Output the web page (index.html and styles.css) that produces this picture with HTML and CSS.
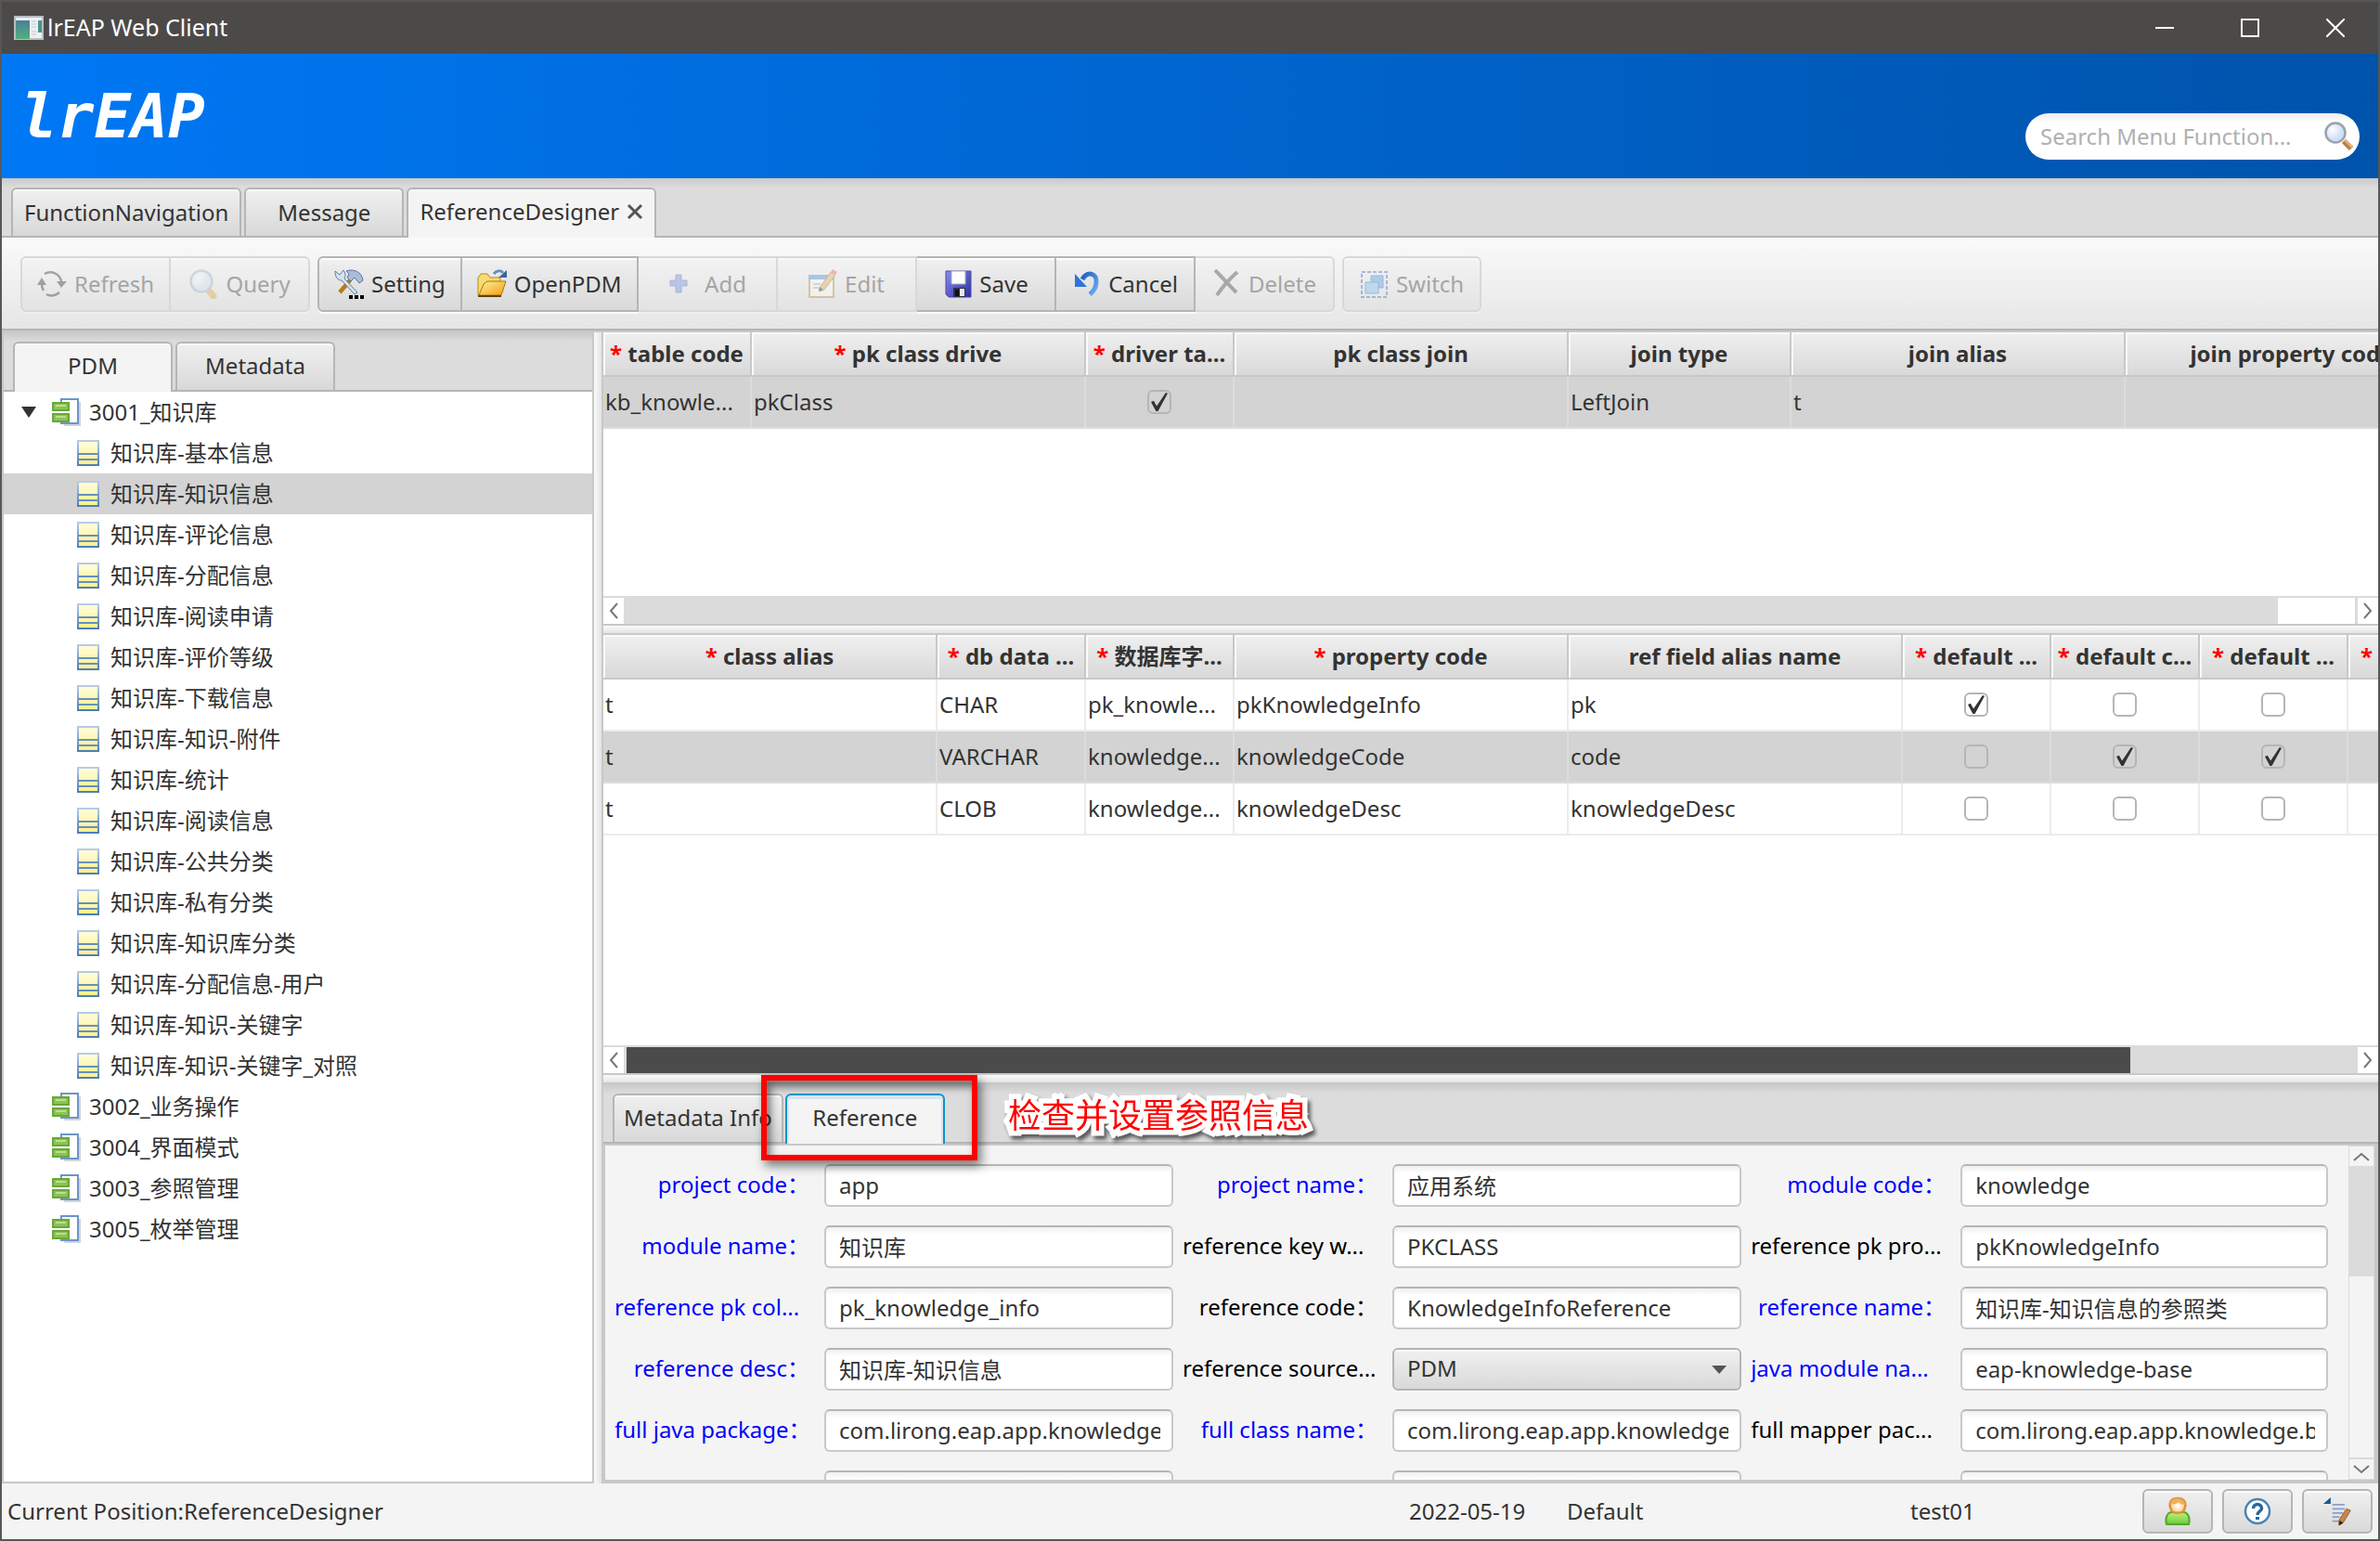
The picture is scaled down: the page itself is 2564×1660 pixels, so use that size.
FILE: index.html
```html
<!DOCTYPE html>
<html lang="zh-CN">
<head>
<meta charset="utf-8">
<title>lrEAP Web Client</title>
<link rel="stylesheet" href="styles.css">
</head>
<body>
<svg class="defs" aria-hidden="true">
  <defs>
    <linearGradient id="g-table" x1="0" y1="0" x2="0" y2="1"><stop offset="0" stop-color="#b9cbe4"/><stop offset="1" stop-color="#4d7db8"/></linearGradient>
    <linearGradient id="g-page" x1="0" y1="0" x2="0" y2="1"><stop offset="0" stop-color="#fffde0"/><stop offset="1" stop-color="#fff08a"/></linearGradient>
    <linearGradient id="g-green" x1="0" y1="0" x2="0" y2="1"><stop offset="0" stop-color="#c0ef7c"/><stop offset="1" stop-color="#6fcb3c"/></linearGradient>
    <linearGradient id="g-folder" x1="0" y1="0" x2="1" y2="1"><stop offset="0" stop-color="#fff09a"/><stop offset="1" stop-color="#f0a010"/></linearGradient>
    <linearGradient id="g-disk" x1="0" y1="0" x2="1" y2="1"><stop offset="0" stop-color="#8b8cf0"/><stop offset="1" stop-color="#2e2e9c"/></linearGradient>
    <linearGradient id="g-undo" x1="0" y1="0" x2="1" y2="1"><stop offset="0" stop-color="#1f5fc4"/><stop offset="1" stop-color="#6fb0f4"/></linearGradient>
    <radialGradient id="g-lens" cx=".35" cy=".35"><stop offset="0" stop-color="#fff"/><stop offset="1" stop-color="#cfe0f6"/></radialGradient>
    <radialGradient id="g-face"><stop offset="0" stop-color="#fff"/><stop offset="1" stop-color="#ffcf8c"/></radialGradient>
    <linearGradient id="g-app" x1="0" y1="0" x2="0" y2="1"><stop offset="0" stop-color="#4a7f9c"/><stop offset="1" stop-color="#52b07a"/></linearGradient>
  </defs>
  <symbol id="i-app" viewBox="0 0 32 26">
    <path d="M1 1h30v24H1z" fill="#eef0f3" stroke="#b9bcc4" stroke-width="2"/>
    <path d="M2 5h15v20H2z" fill="url(#g-app)"/>
    <path d="M19 6h5M19 9h5M19 12h5M19 17h5M19 20h5" stroke="#c4c8cf"/>
    <path d="M26 5h4v13h-4z" fill="#4b9390"/>
  </symbol>
  <symbol id="i-glass" viewBox="0 0 32 32">
    <path d="M21 21l8 8" stroke="#b9803f" stroke-width="6"/>
    <path d="M22 20l8 8" stroke="#e2b47c" stroke-width="2"/>
    <circle cx="12" cy="12" r="10.500" fill="url(#g-lens)" stroke="#9aa3ad" stroke-width="2.500"/>
  </symbol>
  <symbol id="i-query" viewBox="0 0 32 32">
    <path d="M21 22l6 7" stroke="#e0a83c" stroke-width="7" stroke-linecap="round"/>
    <circle cx="14" cy="13" r="11.500" fill="url(#g-lens)" stroke="#a3b1c2" stroke-width="2.500"/>
  </symbol>
  <symbol id="i-refresh" viewBox="0 0 32 32">
    <g fill="none" stroke="#333" stroke-width="2.500"><path d="M8 5a12 12 0 0 1 18 8"/><path d="M5 16a12 12 0 0 0 2 7"/><path d="M10 27a12 12 0 0 0 14-2"/></g>
    <path d="M21 13h11l-6 7zM0 17h10L5 9z" fill="#333"/>
  </symbol>
  <symbol id="i-tools" viewBox="0 0 32 32">
    <path d="M6 25l11-13" stroke="#b87a18" stroke-width="4.500"/>
    <path d="M13 2c8-3 17 1 18 10l-4 3-5-6-4 4-4-4 2-4z" fill="#a9bdd8" stroke="#58749c"/>
    <path d="M1 2l5 4 4-5c3 4 2 7 1 9l14 15-3 2L8 12C4 12 1 9 1 2z" fill="#d6e2f2" stroke="#62799a"/>
    <path d="M16 28h4v4h-4zM22 28h4v4h-4zM28 28h4v4h-4z" fill="#000"/>
  </symbol>
  <symbol id="i-folder" viewBox="0 0 32 32">
    <path d="M1 9l3-4h7l3 4h11v19H1z" fill="#f7dc72" stroke="#b58a1c"/>
    <path d="M7 16l4-3h20l-5 15H2z" fill="url(#g-folder)" stroke="#a8740c"/>
    <path d="M1 29h25" stroke="#5e4410" stroke-width="2"/>
    <path d="M18 5c3-4 8-4 10-1" fill="none" stroke="#6d8fbd" stroke-width="3"/>
    <path d="M32 1v8h-9z" fill="#3f6399"/>
  </symbol>
  <symbol id="i-add" viewBox="0 0 32 32"><path d="M9 6h6v6h6v6h-6v7H9v-7H3v-6h6z" fill="#6f8ede" stroke="#4d6ac0"/></symbol>
  <symbol id="i-edit" viewBox="0 0 32 32">
    <path d="M2 8h26v22H2z" fill="#fffdf4" stroke="#b7903c" stroke-width="2"/>
    <path d="M1 6h28v5H1z" fill="#3f8fd0"/><path d="M6 16h8M6 20h6" stroke="#9db9d9" stroke-width="2"/>
    <path d="M13 20L25 3l5 3-12 16-5 2z" fill="#e6a95e" stroke="#a0662a"/><path d="M25 3l2-3 5 3-2 3z" fill="#e2665a"/>
    <path d="M12 24l1-5 4 3z" fill="#222"/>
  </symbol>
  <symbol id="i-save" viewBox="0 0 32 32">
    <path d="M4 2h27v28H7l-3-3z" fill="url(#g-disk)" stroke="#4a48b4"/>
    <path d="M10 2h15v14H10z" fill="#fff" stroke="#aab"/><path d="M12 20h13v10H12z" fill="#2b2b55"/><path d="M14 22h4v7h-4z" fill="#111"/><path d="M19 21h5v8h-5z" fill="#e8e8e8"/>
  </symbol>
  <symbol id="i-undo" viewBox="0 0 32 32">
    <path d="M12 11C18 1 28 5 27 14c0 6-3 10-7 13" fill="none" stroke="url(#g-undo)" stroke-width="5"/>
    <path d="M4 5v14h13z" fill="#2f74d6"/>
  </symbol>
  <symbol id="i-delete" viewBox="0 0 32 32"><path d="M4 1c8 8 16 17 23 24M28 3C20 10 12 19 6 28" fill="none" stroke="#444" stroke-width="4"/></symbol>
  <symbol id="i-switch" viewBox="0 0 32 32">
    <path d="M3 3h27v27H3z" fill="none" stroke="#3c6cc4" stroke-width="2" stroke-dasharray="4 2"/>
    <path d="M13 7h13v13H13z" fill="#4f9ce0" stroke="#2e6eb8"/><path d="M7 14h14v12H7z" fill="#7cc0f4" stroke="#2e6eb8"/>
  </symbol>
  <symbol id="i-module" viewBox="0 0 32 32">
    <path d="M13 30h17V5" fill="none" stroke="#d2d4d8" stroke-width="2"/>
    <path d="M10 6V2h18v26H10v-4" fill="#fff" stroke="#6c95c8" stroke-width="2"/>
    <path d="M1 6h17v8H1zM1 18h17v8H1z" fill="#8dc257" stroke="#6ba63a" stroke-width="2"/>
    <path d="M4 9h11M4 21h11" stroke="#b9e08c" stroke-width="2"/>
  </symbol>
  <symbol id="i-table" viewBox="0 0 24 28">
    <path d="M1 1h22v26H1z" fill="url(#g-page)" stroke="url(#g-table)" stroke-width="2"/>
    <path d="M1 15h22M1 21h22" stroke="#668fbe" stroke-width="2"/>
  </symbol>
  <symbol id="i-user" viewBox="0 0 32 32">
    <path d="M4 30c-2-7 1-13 6-13h12c5 0 8 6 6 13z" fill="url(#g-green)" stroke="#55a82c" stroke-width="2"/>
    <circle cx="16" cy="10" r="8" fill="url(#g-face)"/>
    <path d="M9 14c-3-6-1-12 7-12s10 6 7 12c-1 5-13 5-14 0z" fill="none" stroke="#dc9434" stroke-width="2.500"/>
    <path d="M8 8c1-8 15-8 16 1-4 0-6-2-7-3-2 2-5 3-9 2z" fill="#eeb060"/>
  </symbol>
  <symbol id="i-help" viewBox="0 0 32 32">
    <circle cx="16" cy="16" r="13" fill="#fff" stroke="#4a84b4" stroke-width="2.500"/>
    <path d="M11.500 13c0-6 9-6 9 0 0 3-4.500 3-4.500 7" fill="none" stroke="#2b6699" stroke-width="3.500"/><path d="M14 22h4v3h-4z" fill="#2b6699"/>
  </symbol>
  <symbol id="i-log" viewBox="0 0 36 36">
    <path d="M1 9L10 1v8z" fill="#1d5a8a"/>
    <path d="M12 10h15M12 15h15M12 20h13M12 25h9M12 30h7" stroke="#8b9ecb" stroke-width="2"/>
    <path d="M20 29L29 15l5 2-9 15-5 3z" fill="#cf8642" stroke="#8d5524"/><path d="M20 35l1-6 4 3z" fill="#222"/>
  </symbol>
  <symbol id="i-chev" viewBox="0 0 12 20"><path d="M10 2L3 10l7 8" fill="none" stroke="#777" stroke-width="2"/></symbol>
</svg>

<div class="window">
  <header class="titlebar">
    <svg class="app-icon"><use href="#i-app"/></svg>
    <span class="title">lrEAP Web Client</span>
    <div class="win-controls">
      <button type="button" aria-label="Minimize"><svg viewBox="0 0 20 20"><path d="M0 10h20" stroke="#fff" stroke-width="2"/></svg></button>
      <button type="button" aria-label="Maximize"><svg viewBox="0 0 20 20"><path d="M1 1h18v18H1z" fill="none" stroke="#fff" stroke-width="2"/></svg></button>
      <button type="button" aria-label="Close"><svg viewBox="0 0 20 20"><path d="M0 0l20 20M20 0L0 20" stroke="#fff" stroke-width="2"/></svg></button>
    </div>
  </header>

  <div class="banner">
    <h1 class="logo">lrEAP</h1>
    <label class="search">
      <input type="text" placeholder="Search Menu Function..." aria-label="Search Menu Function">
      <svg><use href="#i-glass"/></svg>
    </label>
  </div>

  <nav class="tabs">
    <button type="button" class="tab">FunctionNavigation</button>
    <button type="button" class="tab">Message</button>
    <button type="button" class="tab active">ReferenceDesigner<svg class="close" viewBox="0 0 18 18"><path d="M2 2l14 14M16 2L2 16" stroke="#555" stroke-width="3"/></svg></button>
  </nav>

  <div class="toolbar">
    <div class="group">
      <button type="button" disabled><svg><use href="#i-refresh"/></svg>Refresh</button>
      <button type="button" disabled><svg><use href="#i-query"/></svg>Query</button>
    </div>
    <div class="group">
      <button type="button"><svg><use href="#i-tools"/></svg>Setting</button>
      <button type="button"><svg><use href="#i-folder"/></svg>OpenPDM</button>
      <button type="button" disabled><svg><use href="#i-add"/></svg>Add</button>
      <button type="button" disabled><svg><use href="#i-edit"/></svg>Edit</button>
      <button type="button"><svg><use href="#i-save"/></svg>Save</button>
      <button type="button"><svg><use href="#i-undo"/></svg>Cancel</button>
      <button type="button" disabled><svg><use href="#i-delete"/></svg>Delete</button>
    </div>
    <div class="group">
      <button type="button" disabled><svg><use href="#i-switch"/></svg>Switch</button>
    </div>
  </div>

  <main class="content">
    <aside class="side">
      <div class="tabs">
        <button type="button" class="tab active">PDM</button>
        <button type="button" class="tab">Metadata</button>
      </div>
      <ul class="tree">
        <li class="module open"><svg><use href="#i-module"/></svg>3001_知识库</li>
        <li><svg><use href="#i-table"/></svg>知识库-基本信息</li>
        <li class="selected"><svg><use href="#i-table"/></svg>知识库-知识信息</li>
        <li><svg><use href="#i-table"/></svg>知识库-评论信息</li>
        <li><svg><use href="#i-table"/></svg>知识库-分配信息</li>
        <li><svg><use href="#i-table"/></svg>知识库-阅读申请</li>
        <li><svg><use href="#i-table"/></svg>知识库-评价等级</li>
        <li><svg><use href="#i-table"/></svg>知识库-下载信息</li>
        <li><svg><use href="#i-table"/></svg>知识库-知识-附件</li>
        <li><svg><use href="#i-table"/></svg>知识库-统计</li>
        <li><svg><use href="#i-table"/></svg>知识库-阅读信息</li>
        <li><svg><use href="#i-table"/></svg>知识库-公共分类</li>
        <li><svg><use href="#i-table"/></svg>知识库-私有分类</li>
        <li><svg><use href="#i-table"/></svg>知识库-知识库分类</li>
        <li><svg><use href="#i-table"/></svg>知识库-分配信息-用户</li>
        <li><svg><use href="#i-table"/></svg>知识库-知识-关键字</li>
        <li><svg><use href="#i-table"/></svg>知识库-知识-关键字_对照</li>
        <li class="module"><svg><use href="#i-module"/></svg>3002_业务操作</li>
        <li class="module"><svg><use href="#i-module"/></svg>3004_界面模式</li>
        <li class="module"><svg><use href="#i-module"/></svg>3003_参照管理</li>
        <li class="module"><svg><use href="#i-module"/></svg>3005_枚举管理</li>
      </ul>
    </aside>
    <div class="splitter vertical"></div>

    <div class="work">
      <section class="pane pane-join">
        <div class="grid">
          <table>
            <colgroup><col class="s"><col class="l"><col class="s"><col class="l"><col class="m"><col class="l"><col class="l"></colgroup>
            <thead>
              <tr><th><i>*</i> table code</th><th><i>*</i> pk class drive</th><th><i>*</i> driver ta...</th><th>pk class join</th><th>join type</th><th>join alias</th><th>join property code</th></tr>
            </thead>
            <tbody>
              <tr class="selected"><td>kb_knowle...</td><td>pkClass</td><td class="check"><input type="checkbox" aria-label="driver table" checked></td><td></td><td>LeftJoin</td><td>t</td><td></td></tr>
            </tbody>
          </table>
        </div>
        <div class="hscroll">
          <button type="button" aria-label="Scroll left"><svg><use href="#i-chev"/></svg></button>
          <span class="track"><span class="thumb"></span></span>
          <button type="button" class="right" aria-label="Scroll right"><svg><use href="#i-chev"/></svg></button>
        </div>
      </section>
      <div class="splitter"></div>

      <section class="pane pane-fields">
        <div class="grid">
          <table>
            <colgroup><col class="l"><col class="s"><col class="s"><col class="l"><col class="l"><col class="s"><col class="s"><col class="s"><col class="s"></colgroup>
            <thead>
              <tr><th><i>*</i> class alias</th><th><i>*</i> db data ...</th><th><i>*</i> 数据库字...</th><th><i>*</i> property code</th><th>ref field alias name</th><th><i>*</i> default ...</th><th><i>*</i> default c...</th><th><i>*</i> default ...</th><th><i>*</i> default ...</th></tr>
            </thead>
            <tbody>
              <tr><td>t</td><td>CHAR</td><td>pk_knowle...</td><td>pkKnowledgeInfo</td><td>pk</td><td class="check"><input type="checkbox" aria-label="default pk" checked></td><td class="check"><input type="checkbox" aria-label="default code"></td><td class="check"><input type="checkbox" aria-label="default name"></td><td></td></tr>
              <tr class="selected"><td>t</td><td>VARCHAR</td><td>knowledge...</td><td>knowledgeCode</td><td>code</td><td class="check"><input type="checkbox" aria-label="default pk"></td><td class="check"><input type="checkbox" aria-label="default code" checked></td><td class="check"><input type="checkbox" aria-label="default name" checked></td><td></td></tr>
              <tr><td>t</td><td>CLOB</td><td>knowledge...</td><td>knowledgeDesc</td><td>knowledgeDesc</td><td class="check"><input type="checkbox" aria-label="default pk"></td><td class="check"><input type="checkbox" aria-label="default code"></td><td class="check"><input type="checkbox" aria-label="default name"></td><td></td></tr>
            </tbody>
          </table>
        </div>
        <div class="hscroll dark">
          <button type="button" aria-label="Scroll left"><svg><use href="#i-chev"/></svg></button>
          <span class="track"><span class="thumb"></span></span>
          <button type="button" class="right" aria-label="Scroll right"><svg><use href="#i-chev"/></svg></button>
        </div>
      </section>
      <div class="splitter"></div>

      <section class="pane pane-form">
        <div class="tabs">
          <button type="button" class="tab">Metadata Info</button>
          <button type="button" class="tab active focused">Reference</button>
        </div>
        <div class="form-wrap">
          <form class="form">
            <label class="req" for="f1">project code：</label><input id="f1" type="text" value="app">
            <label class="req" for="f2">project name：</label><input id="f2" type="text" value="应用系统">
            <label class="req" for="f3">module code：</label><input id="f3" type="text" value="knowledge">
            <label class="req" for="f4">module name：</label><input id="f4" type="text" value="知识库">
            <label class="cut" for="f5">reference key w...</label><input id="f5" type="text" value="PKCLASS">
            <label class="cut" for="f6">reference pk pro...</label><input id="f6" type="text" value="pkKnowledgeInfo">
            <label class="req cut" for="f7">reference pk col...</label><input id="f7" type="text" value="pk_knowledge_info">
            <label for="f8">reference code：</label><input id="f8" type="text" value="KnowledgeInfoReference">
            <label class="req" for="f9">reference name：</label><input id="f9" type="text" value="知识库-知识信息的参照类">
            <label class="req" for="f10">reference desc：</label><input id="f10" type="text" value="知识库-知识信息">
            <label class="cut" for="f11">reference source...</label><span class="select"><select id="f11"><option>PDM</option></select></span>
            <label class="req cut" for="f12">java module na...</label><input id="f12" type="text" value="eap-knowledge-base">
            <label class="req" for="f13">full java package：</label><input id="f13" type="text" value="com.lirong.eap.app.knowledge.base">
            <label class="req" for="f14">full class name：</label><input id="f14" type="text" value="com.lirong.eap.app.knowledge.base">
            <label class="cut" for="f15">full mapper pac...</label><input id="f15" type="text" value="com.lirong.eap.app.knowledge.base">
            <span></span><input type="text" aria-label="extra 1"><span></span><input type="text" aria-label="extra 2"><span></span><input type="text" aria-label="extra 3">
          </form>
          <div class="vscroll">
            <button type="button" class="up" aria-label="Scroll up"><svg><use href="#i-chev"/></svg></button>
            <span class="track"><span class="thumb"></span></span>
            <button type="button" class="down" aria-label="Scroll down"><svg><use href="#i-chev"/></svg></button>
          </div>
        </div>
        <div class="mark"></div>
        <div class="mark-text">检查并设置参照信息</div>
      </section>
    </div>
  </main>

  <footer class="status">
    <span class="position">Current Position:ReferenceDesigner</span>
    <span class="date">2022-05-19</span>
    <span class="scheme">Default</span>
    <span class="user">test01</span>
    <div class="status-buttons">
      <button type="button" aria-label="User"><svg><use href="#i-user"/></svg></button>
      <button type="button" aria-label="Help"><svg><use href="#i-help"/></svg></button>
      <button type="button" aria-label="Log"><svg><use href="#i-log"/></svg></button>
    </div>
  </footer>
</div>
</body>
</html>
```

FILE: styles.css
```css
* { box-sizing: border-box; }
body { margin: 0; }
body, button, input, select { font: 24px/32px "Noto Sans", "Noto Sans CJK SC", sans-serif; color: #333; }
button { margin: 0; padding: 0; border: 0; background: none; }
.defs { position: absolute; width: 0; height: 0; }

.window { display: flex; flex-direction: column; height: 100vh; border: 2px solid #575757; background: #f4f4f4; overflow: hidden; }

.titlebar { display: flex; align-items: center; height: 56px; padding-left: 13px; background: #4c4a48; color: #fff; flex: none; }
.title { font-size: 25px; line-height: 32px; padding-bottom: 2px; }
.app-icon { width: 32px; height: 26px; margin-right: 4px; }
.win-controls { display: flex; margin-left: auto; }
.win-controls button { width: 92px; height: 40px; }
.win-controls svg { width: 20px; height: 20px; display: block; margin: auto; }

.banner { display: flex; justify-content: space-between; align-items: center; height: 134px; padding: 0 20px; background: linear-gradient(to right, #0078f5, #0053aa); flex: none; }
.logo { margin: 0; padding-top: 2px; font: italic bold 66px/72px "DejaVu Sans Mono", monospace; color: #fff; }
.search { display: flex; align-items: center; width: 360px; height: 50px; margin-top: 44px; padding: 0 6px 0 16px; border-radius: 25px; background: linear-gradient(#ebebeb, #fff 10px); }
.search input { flex: 1; min-width: 0; border: 0; padding: 0; background: none; }
.search input::placeholder { color: #b0b0b0; opacity: 1; }
.search svg { width: 32px; height: 32px; }

.tabs { display: flex; gap: 3px; height: 64px; padding: 10px 10px 0; border-bottom: 2px solid #b5b5b5; background: linear-gradient(#cacaca, #dcdcdc 10px); flex: none; }
.tab { min-width: 172px; height: 52px; padding: 0 10px 2px; border: 2px solid #b5b5b5; border-bottom: 0; border-radius: 6px 6px 0 0; background: linear-gradient(#f0f0f0, #d8d8d8); box-shadow: inset 0 2px #fafafa; display: flex; align-items: center; justify-content: center; white-space: nowrap; }
.tab.active { height: 54px; padding-bottom: 4px; background: #f4f4f4; }
.tab.focused { border-color: #0a96c9; box-shadow: inset 0 4px #d6e4ec, inset 2px 0 #d6e4ec, inset -2px 0 #d6e4ec; }
nav .tab { padding: 0 12px; }
.close { width: 18px; height: 18px; margin-left: 8px; }

.toolbar { display: flex; gap: 8px; padding: 20px 20px 18px; background: linear-gradient(#fafafa, #e6e6e6); border-bottom: 2px solid #b5b5b5; box-shadow: 0 2px #c8c8c8; margin-bottom: 2px; flex: none; }
.group { display: flex; }
.group button { display: flex; align-items: center; justify-content: center; gap: 8px; min-width: 150px; height: 60px; padding: 0 16px; border: solid #b5b5b5; border-width: 2px 2px 2px 0; background: linear-gradient(#f0f0f0, #d9d9d9); box-shadow: inset 0 2px #fcfcfc, 0 2px #fcfcfc; }
.group button:first-child { border-left-width: 2px; border-radius: 6px 0 0 6px; }
.group button:last-child { border-radius: 0 6px 6px 0; }
.group button:only-child { border-radius: 6px; }
.group button:disabled { color: #a5a5a5; border-color: #d8d8d8; background: linear-gradient(#f3f3f3, #e3e3e3); box-shadow: inset 0 2px #f8f8f8, 0 2px #f0f0f0; }
.group button:disabled svg { opacity: .4; }
.group svg { width: 32px; height: 32px; }

.content { display: flex; flex: 1; min-height: 0; }
.side { display: flex; flex-direction: column; flex: 0 0 calc(25% - 2px); border: 2px solid #c8c8c8; border-top: 0; background: #fff; }
.tree { margin: 0; padding: 0; list-style: none; }
.tree li { display: flex; align-items: center; gap: 12px; height: 44px; padding-left: 79px; }
.tree li svg { width: 24px; height: 28px; }
.tree .selected { background: #d3d3d3; }
.tree .module { gap: 8px; padding-left: 52px; }
.tree .module svg { width: 32px; height: 32px; }
.tree .open { padding-left: 19px; gap: 0; }
.tree .open::before { content: ""; width: 16px; height: 12px; margin-right: 17px; background: #333; clip-path: polygon(0 0, 100% 0, 50% 100%); }
.tree .open svg { margin-right: 8px; }

.splitter { flex: 0 0 12px; border: solid #c8c8c8; border-width: 2px 0; background: linear-gradient(#fafafa, #e4e4e4); }
.splitter.vertical { flex-basis: 10px; border-width: 0 2px 0 0; background: linear-gradient(to right, #fafafa, #e4e4e4); }

.work { display: flex; flex-direction: column; flex: 1; min-width: 0; }
.pane { display: flex; flex-direction: column; min-height: 0; background: #fff; position: relative; }
.pane-join { flex: 314 1 0; }
.pane-fields { flex: 472 1 0; }
.pane-form { flex: 430 1 0; background: #f4f4f4; }

.grid { flex: 1; min-height: 0; overflow: hidden; }
.grid table { width: 0; table-layout: fixed; border-collapse: separate; border-spacing: 0; }
.s { width: 160px; }
.m { width: 240px; }
.l { width: 360px; }
th, td { overflow: hidden; white-space: nowrap; border-right: 2px solid #c8c8c8; }
th { height: 48px; padding: 0; border-bottom: 2px solid #c8c8c8; background: linear-gradient(#f0f0f0, #d9d9d9); box-shadow: inset 2px 2px #fafafa; }
th i { color: #f00; font-style: normal; }
td { height: 56px; padding: 0 2px; border-color: #ececec; border-bottom: 2px solid #ececec; }
.selected td { background: #d3d3d3; border-color: #dcdcdc; }
.check input { display: block; appearance: none; width: 26px; height: 26px; margin: 0 auto; border: 2px solid #b5b5b5; border-radius: 6px; }
.check input:checked::before { content: ""; display: block; width: 18px; height: 20px; margin: 1px 2px; background: #333; clip-path: polygon(0 50%, 16% 44%, 34% 72%, 88% 0, 100% 4%, 42% 100%, 30% 100%); }

.hscroll { display: flex; height: 30px; background: #dbdbdb; padding-top: 2px; flex: none; }
.hscroll button { width: 22px; background: #fff; }
.hscroll svg { display: block; width: 12px; height: 20px; margin: auto; }
.right svg { transform: rotate(180deg); }
.track { display: flex; flex: 1; margin: 0 3px; }
.thumb { flex: none; }
.hscroll .thumb { width: 83px; margin-left: auto; background: #fff; }
.dark .thumb { width: 87%; margin-left: 0; background: #4b4b4b; }

.pane-form .tabs { gap: 2px; }
.form-wrap { display: flex; flex: 1; min-height: 0; border: solid #c8c8c8; border-width: 2px 4px 4px 2px; }
.form { display: grid; grid-template-columns: 216px minmax(0, 19fr) 216px minmax(0, 19fr) 216px minmax(0, 20fr); grid-auto-rows: 46px; gap: 20px 10px; flex: 1; min-width: 0; padding: 20px 22px 0 10px; overflow: hidden; }
.form label { line-height: 44px; padding-right: 6px; color: #000; text-align: right; white-space: nowrap; overflow: hidden; }
.form .req { color: #00f; }
.form .cut { padding-right: 0; text-align: left; }
.form input, .form select { width: 100%; height: 46px; padding: 0 12px 2px 14px; border: 2px solid #c8c8c8; border-top-color: #b5b5b5; border-radius: 6px; background: linear-gradient(#f0f0f0, #fff 8px); }
.select { position: relative; }
.form select { appearance: none; border-color: #b5b5b5; background: linear-gradient(#f0f0f0, #d9d9d9); box-shadow: inset 0 2px #fafafa, 0 2px #fcfcfc; }
.select::after { content: ""; position: absolute; right: 16px; top: 19px; width: 16px; height: 9px; background: #555; clip-path: polygon(0 0, 100% 0, 50% 100%); }

.vscroll { display: flex; flex-direction: column; width: 28px; padding: 1px; background: #dbdbdb; }
.vscroll button { height: 21px; background: #f4f4f4; }
.vscroll svg { display: block; width: 12px; height: 20px; margin: auto; }
.up svg { transform: rotate(90deg); }
.down svg { transform: rotate(-90deg); }
.vscroll .track { flex-direction: column; margin: 0 0 2px; background: #f4f4f4; }
.vscroll .thumb { height: 38%; background: #dbdbdb; }

/* callout over the tab strip */
.mark { position: absolute; left: 170px; top: -10px; width: 233px; height: 92px; border: 6px solid #f00; box-shadow: 4px 6px 10px rgba(0, 0, 0, .5), inset 4px 6px 10px rgba(0, 0, 0, .5); }
.mark-text { position: absolute; left: 436px; top: 8px; font-size: 36px; line-height: 52px; color: #f00; white-space: nowrap; -webkit-text-stroke: 11px #fff; paint-order: stroke fill; stroke-linejoin: round; filter: drop-shadow(3px 4px 2px rgba(0, 0, 0, .6)); }

.status { display: grid; grid-template-columns: 1510px 170px 370px 1fr auto; align-items: center; height: 60px; padding: 0 6px; flex: none; }
.status-buttons { display: flex; gap: 10px; }
.status-buttons button { width: 76px; height: 48px; border: 2px solid #b5b5b5; border-radius: 6px; background: linear-gradient(#f0f0f0, #d9d9d9); box-shadow: inset 0 2px #fafafa, 0 2px #fcfcfc; }
.status-buttons svg { display: block; width: 32px; height: 32px; margin: auto; }
```
